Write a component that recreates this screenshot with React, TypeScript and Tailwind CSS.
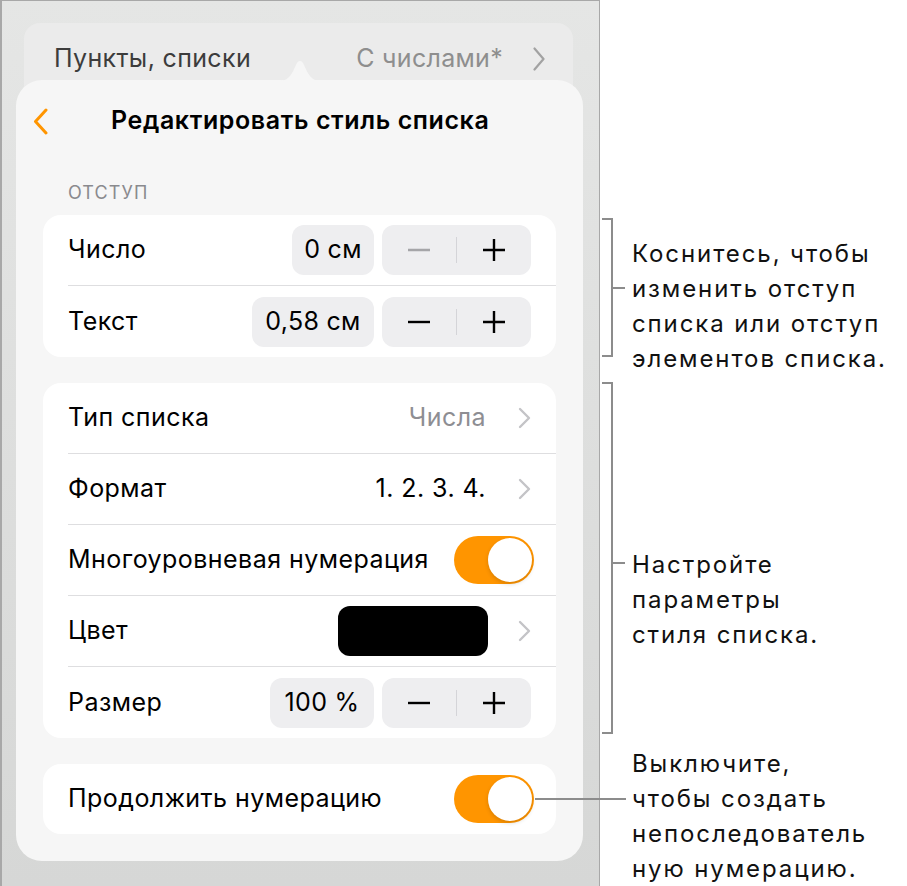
import React from "react";

const Chevron = ({ className = "" }: { className?: string }) => (
  <svg width="13" height="22" viewBox="0 0 13 22" className={className} fill="none">
    <path d="M2 2 L11 11 L2 20" stroke="currentColor" strokeWidth="2.4" strokeLinecap="round" strokeLinejoin="round" />
  </svg>
);

const Minus = ({ dim }: { dim?: boolean }) => (
  <svg width="22" height="22" viewBox="0 0 22 22">
    <path d="M0 11 H22" stroke={dim ? "#a5a5a8" : "#000"} strokeWidth="2.4" />
  </svg>
);

const Plus = () => (
  <svg width="22" height="22" viewBox="0 0 22 22">
    <path d="M0 11 H22 M11 0 V22" stroke="#000" strokeWidth="2.4" />
  </svg>
);

const Stepper = ({ value, width, dimMinus }: { value: string; width: string; dimMinus?: boolean }) => (
  <div className="flex items-center gap-[8px]">
    <div className={`flex h-[50px] ${width} items-center justify-center rounded-[12px] bg-[#eeeef0] text-[25px] tracking-[0.3px]`}>
      {value}
    </div>
    <div className="flex h-[50px] w-[149px] items-center rounded-[12px] bg-[#eeeef0]">
      <div className="flex flex-1 items-center justify-center">
        <Minus dim={dimMinus} />
      </div>
      <div className="h-[26px] w-px bg-[#d4d4d8]" />
      <div className="flex flex-1 items-center justify-center">
        <Plus />
      </div>
    </div>
  </div>
);

const Toggle = () => (
  <div className="relative h-[48px] w-[80px] rounded-full bg-[#ff9500]">
    <div className="absolute right-[2px] top-[2px] h-[44px] w-[44px] rounded-full bg-white shadow-[0_2px_4px_rgba(0,0,0,0.15)]" />
  </div>
);

const Row = ({ label, last, children }: { label: string; last?: boolean; children?: React.ReactNode }) => (
  <div className="pl-[25px]">
    <div className={`flex h-[71px] items-center justify-between pr-[25px] ${last ? "" : "border-b border-[#dedee0]"}`}>
      <span className="text-[25px] tracking-[0.45px] text-black">{label}</span>
      {children}
    </div>
  </div>
);

export default function App() {
  return (
    <div className="relative flex h-[886px] w-[907px] overflow-hidden bg-white font-['Inter',sans-serif] text-black">
      {/* device screenshot */}
      <div className="h-full w-[600px] border-l-2 border-r border-t border-[#a8a8a8] bg-gradient-to-b from-[#e5e6e5] to-[#d6d7d6]">
        <div className="ml-[22px] mt-[22px] h-[90px] w-[549px] rounded-[16px] bg-[#ebebeb]">
          <div className="flex h-[72px] items-center justify-between pl-[30px] pr-[28px]">
            <span className="text-[25px] tracking-[0.35px] text-[#3c3c3c]">Пункты, списки</span>
            <div className="flex items-center gap-[30px] text-[#8e8e8e]">
              <span className="text-[25px] tracking-[0.3px]">С числами*</span>
              <svg width="12" height="24" viewBox="0 0 12 24" fill="none">
                <path d="M1.5 1.5 L10.5 12 L1.5 22.5" stroke="#a2a2a2" strokeWidth="2.2" strokeLinecap="round" strokeLinejoin="round" />
              </svg>
            </div>
          </div>
        </div>

        {/* popover */}
        <div className="relative -mt-[33px] ml-[14px] h-[781px] w-[567px] rounded-[26px] bg-[#f6f6f6] px-[27px]">
          <svg className="absolute -top-[21px] left-[262px]" width="44" height="22" viewBox="0 0 44 22">
            <path d="M0 22 C12 22 14 14 18 6 C20 0.5 24 0.5 26 6 C30 14 32 22 44 22 Z" fill="#f6f6f6" />
          </svg>

          <div className="flex h-[82px] items-center">
            <svg className="-ml-[10px]" width="15" height="27" viewBox="0 0 15 27" fill="none">
              <path d="M13 2 L2.5 13.5 L13 25" stroke="#ff9500" strokeWidth="3" strokeLinecap="round" strokeLinejoin="round" />
            </svg>
            <span className="ml-[63px] text-[25px] font-semibold tracking-[0.6px]">Редактировать стиль списка</span>
          </div>

          <div className="h-[53px] pl-[25px] pt-[20px] text-[18px] leading-[22px] tracking-[1.1px] text-[#8a8a8e]">ОТСТУП</div>

          <div className="overflow-hidden rounded-[18px] bg-white">
            <Row label="Число">
              <Stepper value="0 см" width="w-[82px]" dimMinus />
            </Row>
            <Row label="Текст" last>
              <Stepper value="0,58 см" width="w-[122px]" />
            </Row>
          </div>

          <div className="mt-[26px] overflow-hidden rounded-[18px] bg-white">
            <Row label="Тип списка">
              <div className="flex items-center gap-[32px]">
                <span className="text-[25px] tracking-[0.45px] text-[#8e8e93]">Числа</span>
                <Chevron className="text-[#c4c4c7]" />
              </div>
            </Row>
            <Row label="Формат">
              <div className="flex items-center gap-[32px]">
                <span className="text-[25px] tracking-[0.45px]">1. 2. 3. 4.</span>
                <Chevron className="text-[#c4c4c7]" />
              </div>
            </Row>
            <Row label="Многоуровневая нумерация">
              <div className="-mr-[3px]">
                <Toggle />
              </div>
            </Row>
            <Row label="Цвет">
              <div className="flex items-center gap-[30px]">
                <div className="h-[50px] w-[150px] rounded-[12px] bg-black" />
                <Chevron className="text-[#c4c4c7]" />
              </div>
            </Row>
            <Row label="Размер" last>
              <Stepper value="100 %" width="w-[104px]" />
            </Row>
          </div>

          <div className="mt-[26px] overflow-hidden rounded-[18px] bg-white">
            <div className="flex h-[70px] items-center justify-between pl-[25px] pr-[22px]">
              <span className="text-[25px] tracking-[0.45px]">Продолжить нумерацию</span>
              <Toggle />
            </div>
          </div>
        </div>
      </div>

      {/* annotations */}
      <div className="relative flex-1 whitespace-nowrap pl-[32px] text-[24px] leading-[35px] tracking-[1.9px] text-[#111]">
        <div className="absolute left-[2px] top-[218px] h-[139px] w-[11px] border-y-2 border-r-2 border-[#8c8c8c]" />
        <div className="absolute left-[12px] top-[287px] h-[2px] w-[13px] bg-[#8c8c8c]" />
        <div className="absolute left-[2px] top-[382px] h-[352px] w-[11px] border-y-2 border-r-2 border-[#8c8c8c]" />
        <div className="absolute left-[12px] top-[562px] h-[2px] w-[13px] bg-[#8c8c8c]" />

        <p className="mt-[236px]">
          Коснитесь, чтобы
          <br />
          изменить отступ
          <br />
          списка или отступ
          <br />
          элементов списка.
        </p>
        <p className="mt-[171px]">
          Настройте
          <br />
          параметры
          <br />
          стиля списка.
        </p>
        <p className="mt-[94px]">
          Выключите,
          <br />
          чтобы создать
          <br />
          непоследователь
          <br />
          ную нумерацию.
        </p>
      </div>

      {/* callout from the continue toggle */}
      <div className="absolute left-[535px] top-[798px] h-[2px] w-[91px] bg-[#8c8c8c]" />
    </div>
  );
}
